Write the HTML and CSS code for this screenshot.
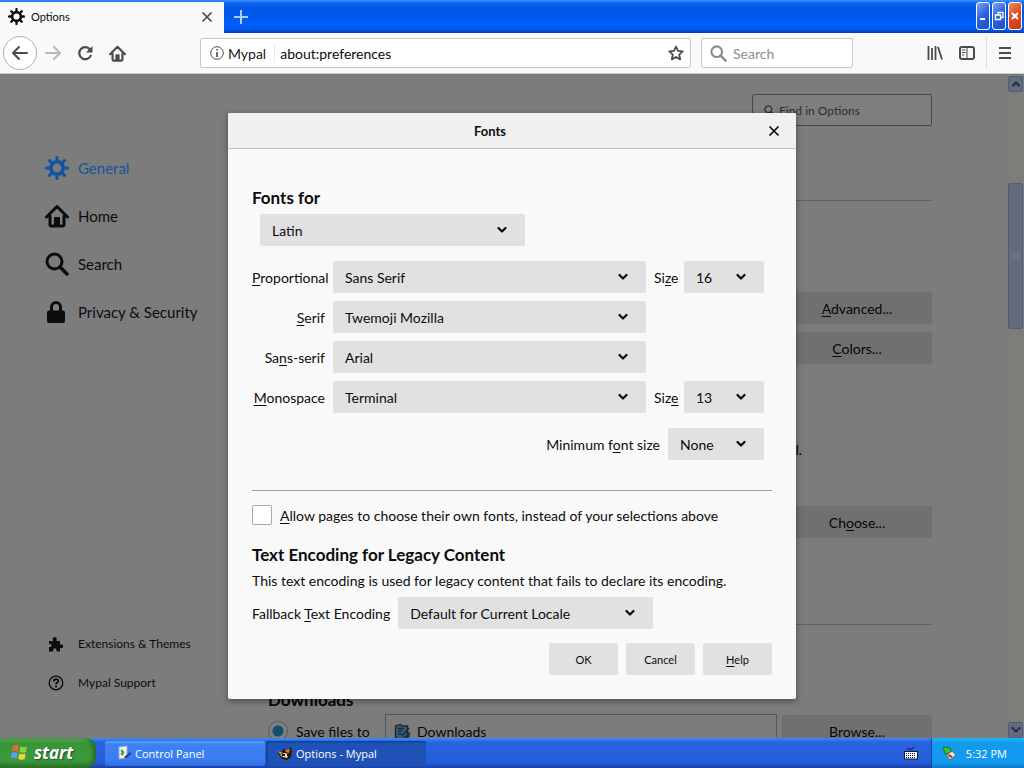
FILE: index.html
```html
<!DOCTYPE html>
<html lang="en">
<head>
    <meta charset="UTF-8">
    <meta name="viewport" content="width=device-width, initial-scale=1.0">
    <title>Options</title>
    <link rel="stylesheet" href="styles.css">
</head>
<body>

    <!-- shared icons -->
    <svg class="defs" width="0" height="0">
        <symbol id="gear" viewBox="0 0 24 24">
            <circle cx="12" cy="12" r="6.200" fill="none" stroke="currentColor" stroke-width="3.600"/>
            <g stroke="currentColor" stroke-width="3.200" stroke-linecap="round">
                <path d="M12 1.500v4M12 18.500v4M1.500 12h4M18.500 12h4M4.600 4.600l2.800 2.800M16.600 16.600l2.800 2.800M4.600 19.400l2.800-2.800M16.600 7.400l2.800-2.800"/>
            </g>
        </symbol>
        <symbol id="house" viewBox="0 0 24 24">
            <path d="M1.500 13L12 2.500 22.500 13M5 12v8.500q0 1.500 1.500 1.500h11q1.500 0 1.500-1.500V12" fill="none" stroke="currentColor" stroke-width="3" stroke-linecap="round" stroke-linejoin="round"/>
            <path d="M9 22v-8q0-1 1-1h4q1 0 1 1v8z" fill="currentColor"/>
        </symbol>
        <symbol id="glass" viewBox="0 0 24 24">
            <circle cx="9.500" cy="9.500" r="7.500" fill="none" stroke="currentColor" stroke-width="3"/>
            <path d="M15 15l7 7" stroke="currentColor" stroke-width="3.500" stroke-linecap="round"/>
        </symbol>
        <symbol id="chevron" viewBox="0 0 10 8">
            <path d="M1.500 2L5 5.500 8.500 2" fill="none" stroke="currentColor" stroke-width="2.200" stroke-linecap="round" stroke-linejoin="round"/>
        </symbol>
        <symbol id="cross" viewBox="0 0 12 12">
            <path d="M1.500 1.500l9 9M10.500 1.500l-9 9" stroke="currentColor" stroke-width="1.700"/>
        </symbol>
    </svg>

    <header class="titlebar">
        <div class="tab">
            <svg class="tab-icon"><use href="#gear"/></svg>
            <span class="tab-title">Options</span>
            <button class="tab-close" aria-label="Close tab"><svg width="12" height="12"><use href="#cross"/></svg></button>
        </div>
        <button class="new-tab" aria-label="New tab"><svg width="16" height="16" viewBox="0 0 16 16"><path d="M8 1v14M1 8h14" stroke="#a8d0ff" stroke-width="2"/></svg></button>
        <div class="window-buttons">
            <button class="win" aria-label="Minimize"><svg viewBox="0 0 12 26"><path d="M3 16h5" stroke="#fff" stroke-width="2"/></svg></button>
            <button class="win" aria-label="Restore"><svg viewBox="0 0 12 26"><path d="M5 12V9.500h5v5H8M2.500 12h5v4.500h-5z" fill="none" stroke="#fff" stroke-width="1.300"/></svg></button>
            <button class="win win-close" aria-label="Close"><svg viewBox="0 0 12 26"><path d="M3 10l6 6M9 10l-6 6" stroke="#fff" stroke-width="2"/></svg></button>
        </div>
    </header>

    <nav class="toolbar">
        <button class="back" aria-label="Back"><svg width="18" height="18" viewBox="0 0 18 18"><path d="M16 9H2M8 3L2 9l6 6" fill="none" stroke="currentColor" stroke-width="2" stroke-linecap="round" stroke-linejoin="round"/></svg></button>
        <button class="tool forward" aria-label="Forward"><svg width="16" height="16" viewBox="0 0 16 16"><path d="M1 8h14M9 2l6 6-6 6" fill="none" stroke="currentColor" stroke-width="2" stroke-linecap="round" stroke-linejoin="round"/></svg></button>
        <button class="tool" aria-label="Reload"><svg width="16" height="16" viewBox="0 0 16 16"><path d="M13 4.500A6 6 0 1 0 14 10" fill="none" stroke="currentColor" stroke-width="2.200"/><path d="M15.500 1v6.500H9z" fill="currentColor"/></svg></button>
        <button class="tool" aria-label="Home"><svg width="17" height="17"><use href="#house"/></svg></button>
        <div class="urlbar">
            <svg width="14" height="14" viewBox="0 0 14 14"><circle cx="7" cy="7" r="6.300" fill="none" stroke="currentColor"/><path d="M7 6v5M7 3v1.600" stroke="currentColor" stroke-width="1.600"/></svg>
            <span class="identity">Mypal</span>
            <input class="url" type="text" value="about:preferences" aria-label="Address">
            <button class="star" aria-label="Bookmark"><svg width="16" height="16" viewBox="0 0 16 16"><path d="M8 1.500l2 4.400 4.700.5-3.500 3.200 1 4.800L8 12l-4.200 2.400 1-4.800L1.300 6.400 6 5.900z" fill="none" stroke="currentColor" stroke-width="1.800" stroke-linejoin="round"/></svg></button>
        </div>
        <div class="searchbar">
            <svg width="17" height="17"><use href="#glass"/></svg>
            <input type="text" placeholder="Search" aria-label="Search">
        </div>
        <button class="tool" aria-label="Library"><svg width="16" height="16" viewBox="0 0 16 16"><path d="M1.500 1v14M5 3v12M8.500 1v14M11 2l4 12.500" stroke="currentColor" stroke-width="1.800"/></svg></button>
        <button class="tool" aria-label="Sidebars"><svg width="16" height="16" viewBox="0 0 16 16"><rect x="1" y="2" width="14" height="12" rx="2" fill="none" stroke="currentColor" stroke-width="2"/><path d="M8 2v12M3 5h3.500M3 7.500h3.500M3 10h2" stroke="currentColor"/></svg></button>
        <button class="tool menu" aria-label="Menu"><svg width="14" height="14" viewBox="0 0 14 14"><path d="M1 2h12M1 7h12M1 12h12" stroke="currentColor" stroke-width="2"/></svg></button>
    </nav>

    <main class="page">
        <aside class="sidebar">
            <a class="category selected" href="#general"><svg><use href="#gear"/></svg>General</a>
            <a class="category" href="#home"><svg><use href="#house"/></svg>Home</a>
            <a class="category" href="#search"><svg><use href="#glass"/></svg>Search</a>
            <a class="category" href="#privacy"><svg viewBox="0 0 24 24"><rect x="2" y="10.500" width="18" height="12.500" rx="2" fill="currentColor"/><path d="M6.500 11V7a4.500 4.500 0 0 1 9 0v4" fill="none" stroke="currentColor" stroke-width="3"/></svg>Privacy &amp; Security</a>
            <div class="sidebar-footer">
                <a class="category small" href="#addons"><svg viewBox="0 0 16 16"><path d="M1 5h4V4a2 2 0 1 1 3.500 0v1H12v3.500h1a1.800 1.800 0 1 1 0 3.500h-1v3.500H8.500V14a1.700 1.700 0 0 0-3.400 0v1.500H1V11h1a1.500 1.500 0 0 0 0-3H1z" fill="currentColor"/></svg>Extensions &amp; Themes</a>
                <a class="category small" href="#support"><svg viewBox="0 0 16 16"><circle cx="8" cy="8" r="6.800" fill="none" stroke="currentColor" stroke-width="1.300"/><path d="M5.800 6.500c0-3 4.500-3 4.500-.4C10.300 7.500 8 7.700 8 9.500M8 10.800v1.800" fill="none" stroke="currentColor" stroke-width="1.800"/></svg>Mypal Support</a>
            </div>
        </aside>

        <section class="content">
            <div class="find">
                <svg width="11" height="11"><use href="#glass"/></svg>
                <input type="text" placeholder="Find in Options" aria-label="Find in Options">
            </div>
            <div class="group group-fonts">
                <button class="btn"><u>A</u>dvanced...</button>
                <button class="btn"><u>C</u>olors...</button>
            </div>
            <p class="note">al.</p>
            <button class="btn choose">Ch<u>o</u>ose...</button>
            <div class="group group-files">
                <h2>Downloads</h2>
                <div class="save-row">
                    <label class="save"><input type="radio" name="save" checked>Save files to</label>
                    <div class="folder">
                        <svg width="17" height="17" viewBox="0 0 17 17"><path d="M1.500 3l5-1.500L8 3h5.500v12.500h-12z" fill="#87b5dc" stroke="#23567f" stroke-width="1.500"/><path d="M4 5.500h6M4 8h4M4 11h4M8 13l7-8M10 13.500h5V9" fill="none" stroke="#23567f" stroke-width="1.500"/></svg>
                        <input type="text" value="Downloads" aria-label="Download folder">
                    </div>
                    <button class="btn">Browse...</button>
                </div>
            </div>
        </section>

        <div class="scrollbar">
            <button class="arrow" aria-label="Scroll up"><svg width="10" height="8" viewBox="0 0 10 8"><path d="M1.500 6L5 2.500 8.500 6" fill="none" stroke="#4d6185" stroke-width="2.200"/></svg></button>
            <div class="thumb"><svg width="8" height="9" viewBox="0 0 8 9"><path d="M0 1h8M0 4h8M0 7h8" stroke="#eef4fe"/></svg></div>
            <button class="arrow" aria-label="Scroll down"><svg width="10" height="8"><use href="#chevron"/></svg></button>
        </div>

        <div class="overlay">
            <form class="dialog" role="dialog" aria-labelledby="dialog-title">
                <div class="dialog-header">
                    <span id="dialog-title">Fonts</span>
                    <button type="button" class="dialog-close" aria-label="Close"><svg width="12" height="12"><use href="#cross"/></svg></button>
                </div>
                <div class="dialog-body">
                    <h2><label for="language">Fonts for</label></h2>
                    <div class="select language">
                        <select id="language"><option>Latin</option></select>
                        <svg><use href="#chevron"/></svg>
                    </div>

                    <div class="font-grid">
                        <label class="name" for="proportional"><u>P</u>roportional</label>
                        <div class="select"><select id="proportional"><option>Sans Serif</option></select><svg><use href="#chevron"/></svg></div>
                        <label for="size-var">Si<u>z</u>e</label>
                        <div class="select"><select id="size-var"><option>16</option></select><svg><use href="#chevron"/></svg></div>

                        <label class="name" for="serif"><u>S</u>erif</label>
                        <div class="select"><select id="serif"><option>Twemoji Mozilla</option></select><svg><use href="#chevron"/></svg></div>

                        <label class="name" for="sans">Sa<u>n</u>s-serif</label>
                        <div class="select"><select id="sans"><option>Arial</option></select><svg><use href="#chevron"/></svg></div>

                        <label class="name" for="mono"><u>M</u>onospace</label>
                        <div class="select"><select id="mono"><option>Terminal</option></select><svg><use href="#chevron"/></svg></div>
                        <label for="size-mono">Siz<u>e</u></label>
                        <div class="select"><select id="size-mono"><option>13</option></select><svg><use href="#chevron"/></svg></div>
                    </div>

                    <div class="minimum">
                        <label for="min-size">Minimum f<u>o</u>nt size</label>
                        <div class="select"><select id="min-size"><option>None</option></select><svg><use href="#chevron"/></svg></div>
                    </div>

                    <hr>

                    <label class="allow"><input type="checkbox"><span><u>A</u>llow pages to choose their own fonts, instead of your selections above</span></label>

                    <h2>Text Encoding for Legacy Content</h2>
                    <p>This text encoding is used for legacy content that fails to declare its encoding.</p>
                    <div class="fallback">
                        <label for="encoding">Fallback <u>T</u>ext Encoding</label>
                        <div class="select"><select id="encoding"><option>Default for Current Locale</option></select><svg><use href="#chevron"/></svg></div>
                    </div>

                    <div class="dialog-buttons">
                        <button type="button">OK</button>
                        <button type="button">Cancel</button>
                        <button type="button"><u>H</u>elp</button>
                    </div>
                </div>
            </form>
        </div>
    </main>

    <footer class="taskbar">
        <button class="start">
            <svg width="20" height="20" viewBox="0 0 20 20"><path d="M3 4q3-2 6 0L8 9.500q-3-1.500-6 0z" fill="#f0623a"/><path d="M10.500 4.500q3 1.500 6.500 0l-1 5.500q-3 1.500-6.500 0z" fill="#8bd23c"/><path d="M1.700 11q3-1.500 6 0l-1 5.500q-3-1.500-6 0z" fill="#5b9cf5"/><path d="M9.200 11.500q3 1.500 6.500 0l-1 5.500q-3 1.500-6.500 0z" fill="#fbce3b"/></svg>
            start
        </button>
        <button class="task">
            <svg width="16" height="16" viewBox="0 0 16 16"><path d="M3 2l8-1v12l-8 1z" fill="#eef6e8" stroke="#8bb0d8"/><path d="M5 5l3 3M5 8l2 2" stroke="#469455" stroke-width="2"/><path d="M8 12l6-5 1 2-5 5z" fill="#24488e"/></svg>
            Control Panel
        </button>
        <button class="task active">
            <svg width="16" height="16" viewBox="0 0 16 16"><path d="M1 6l3 1 3-3 3 1 4-3 1 4-1 6-4 3-5-1-3-4z" fill="#2b1a12"/><path d="M3 10l4-2 5 1-2 4-4-1z" fill="#f0dba9"/><path d="M8 5l5-1-1 4-3-1z" fill="#dc7b27"/><path d="M1 6l2 3 3-1z" fill="#e8a74c"/><path d="M5 10h3M10 10h2" stroke="#17120f" stroke-width="2"/></svg>
            Options - Mypal
        </button>
        <svg class="keyboard" width="14" height="14" viewBox="0 0 14 14"><path d="M3 4q1-3 3-1t4-2" fill="none" stroke="#101840"/><rect x=".5" y="5.500" width="13" height="7.500" fill="#fff" stroke="#101840"/><path d="M2 7.500h10M2 9.500h10M2 11.500h10" stroke="#101840" stroke-dasharray="1 1"/></svg>
        <div class="tray">
            <svg width="16" height="16" viewBox="0 0 16 16"><path d="M2 2l7 1 1 4-6 2z" fill="#35c738" stroke="#167a28"/><path d="M5 10l6-4 4 4-6 5z" fill="#e4e4d4" stroke="#59645f"/><path d="M7 10l4 2" stroke="#b33c30" stroke-width="2"/></svg>
            <span>5:32 PM</span>
        </div>
    </footer>

</body>
</html>
```

FILE: styles.css
```css
* {
    box-sizing: border-box;
}

body {
    margin: 0;
    height: 100vh;
    display: flex;
    flex-direction: column;
    overflow: hidden;
    font-family: Lato, sans-serif;
    font-size: 14px;
    color: #0c0c0d;
}

button, input, select {
    font: inherit;
    color: inherit;
    margin: 0;
    padding: 0;
    border: none;
    background: none;
}

svg {
    flex: none;
}

.defs {
    position: absolute;
}

h2 {
    margin: 0;
    font-size: 17px;
    line-height: 24px;
    font-weight: 700;
}

u {
    text-underline-offset: 2px;
}

/* Title bar */

.titlebar {
    display: flex;
    height: 33px;
    background: linear-gradient(#3c93ff, #0f66ee 3px, #0055e5 10px, #0060fa 26px, #0058e6 30px, #003bb0);
}

.tab {
    display: flex;
    align-items: center;
    width: 224px;
    margin-top: 2px;
    padding: 0 11px 2px 8px;
    background: #f9f9fa;
    font-size: 11px;
}

.tab-icon {
    width: 17px;
    height: 17px;
    margin-right: 6px;
}

.tab-title {
    flex: 1;
}

.tab-close, .new-tab, .back, .tool, .star, .win, .dialog-close, .arrow {
    display: flex;
    align-items: center;
    justify-content: center;
}

.tab-close {
    color: #4a4a4f;
}

.new-tab {
    width: 34px;
}

.window-buttons {
    display: flex;
    gap: 2px;
    margin-left: auto;
    padding: 2px 2px 3px 0;
}

.win {
    width: 14px;
    border: 1px solid #fff;
    border-radius: 3px;
    background: linear-gradient(135deg, #7ca5f4, #2c5fdc 50%, #1c4fc8);
}

.win-close {
    background: linear-gradient(135deg, #f08c6c, #dc4a20 50%, #c43c10);
}

.win svg {
    width: 12px;
    height: 26px;
}

/* Toolbar */

.toolbar {
    display: flex;
    align-items: center;
    height: 41px;
    padding: 0 2px 0 3px;
    background: #f9f9fa;
    border-bottom: 1px solid #ccc;
    color: #4a4a4f;
}

.back {
    width: 34px;
    height: 34px;
    border: 1px solid #b1b1b1;
    border-radius: 50%;
    background: #fff;
}

.tool {
    width: 32px;
    height: 32px;
}

.forward {
    color: #b8b8b9;
}

.menu {
    width: 36px;
    margin-left: 3px;
    border-left: 1px solid #ddd;
}

.urlbar, .searchbar {
    display: flex;
    align-items: center;
    height: 30px;
    border: 1px solid #c8c8c0;
    border-radius: 2px;
    background: #fff;
}

.urlbar {
    flex: 1;
    min-width: 0;
    margin-left: 67px;
    padding: 0 6px 0 9px;
}

.identity {
    margin-left: 4px;
    padding-right: 8px;
    color: #202020;
    border-right: 1px solid #e8e8e8;
}

.url {
    flex: 1;
    min-width: 0;
    margin-left: 5px;
    color: #0c0c0d;
}

.searchbar {
    width: 152px;
    margin: 0 66px 0 10px;
    padding-left: 8px;
    color: #8c8c8c;
}

.searchbar input {
    width: 110px;
    margin-left: 6px;
}

input::placeholder {
    color: inherit;
    opacity: 1;
}

/* Options page */

.page {
    position: relative;
    flex: 1;
    min-height: 0;
    display: flex;
    overflow: hidden;
    background: #f9f9fa;
}

/* The category list keeps its own colours over the dimmed page */
.sidebar {
    position: relative;
    z-index: 2;
    display: flex;
    flex-direction: column;
    width: 228px;
    padding: 70px 0 36px 45px;
}

.category {
    display: flex;
    align-items: center;
    gap: 9px;
    height: 48px;
    font-size: 15px;
    color: #0c0c0d;
    text-decoration: none;
}

.category svg {
    width: 24px;
    height: 24px;
}

.selected {
    color: #14549e;
}

.sidebar-footer {
    margin-top: auto;
}

.small {
    height: 39px;
    gap: 14px;
    padding-left: 3px;
    font-size: 12px;
}

.small svg {
    width: 16px;
    height: 16px;
}

.content {
    flex: 0 1 664px;
    margin-left: 40px;
    padding-top: 20px;
}

.find {
    display: flex;
    align-items: center;
    width: 180px;
    height: 32px;
    margin-left: auto;
    padding-left: 11px;
    border: 1px solid #909090;
    border-radius: 2px;
    background: #fdfdfd;
    font-size: 12px;
    color: #606060;
}

.find input {
    width: 140px;
    margin-left: 4px;
}

.group {
    border-top: 1px solid #c4c4c4;
}

.group-fonts {
    display: flex;
    flex-direction: column;
    align-items: flex-end;
    gap: 8px;
    margin-top: 74px;
    padding-top: 91px;
}

.btn {
    width: 150px;
    height: 32px;
    border-radius: 2px;
    background: #e1e1e2;
}

.note {
    margin: 76px 130px 46px 0;
    line-height: 20px;
    text-align: right;
}

.choose {
    display: block;
    margin-left: auto;
}

.group-files {
    margin-top: 86px;
    padding-top: 63px;
}

.save-row {
    display: flex;
    align-items: center;
    margin-top: 2px;
}

.save {
    display: flex;
    align-items: center;
    gap: 8px;
    width: 117px;
    white-space: nowrap;
}

.save input {
    appearance: none;
    width: 20px;
    height: 20px;
    border: 1px solid #b0b0b0;
    border-radius: 50%;
    background: radial-gradient(circle, #2a9ad8 5px, #fff 6px);
}

.folder {
    flex: 1;
    min-width: 0;
    display: flex;
    align-items: center;
    gap: 6px;
    height: 34px;
    margin-right: 5px;
    padding-left: 8px;
    border: 1px solid #b0b0b0;
}

.scrollbar {
    display: flex;
    flex-direction: column;
    width: 16px;
    margin-left: auto;
    padding-top: 2px;
    background: #fbfbf4;
    color: #4d6185;
}

.arrow, .thumb {
    width: 15px;
    height: 16px;
    border: 1px solid #a4b8f4;
    border-radius: 2px;
    background: #c8d6fb;
}

.thumb {
    display: flex;
    align-items: center;
    justify-content: center;
    height: 146px;
    margin: 91px 0 auto;
}

/* Dialog */

.overlay {
    position: absolute;
    inset: 0;
    z-index: 1;
    display: flex;
    align-items: center;
    justify-content: center;
    background: rgba(0, 0, 0, 0.5);
}

.dialog {
    width: 568px;
    border-radius: 2px;
    background: #f9f9fa;
    box-shadow: 0 2px 6px rgba(0, 0, 0, 0.4);
}

.dialog-header {
    display: flex;
    align-items: center;
    height: 36px;
    border-bottom: 1px solid #c1c1c1;
    border-radius: 2px 2px 0 0;
    background: #f0f0f1;
    font-size: 13px;
    font-weight: 700;
}

#dialog-title {
    flex: 1;
    text-align: center;
}

.dialog-close {
    width: 44px;
    height: 32px;
}

.dialog-body {
    padding: 37px 24px 24px;
}

.select {
    display: grid;
    align-items: center;
}

.select select {
    grid-area: 1 / 1;
    appearance: none;
    width: 100%;
    height: 32px;
    padding: 0 12px;
    border-radius: 2px;
    background: #e1e1e2;
}

.select svg {
    grid-area: 1 / 1;
    justify-self: end;
    width: 10px;
    height: 8px;
    margin-right: 18px;
    pointer-events: none;
}

.language {
    width: 265px;
    margin: 4px 0 15px 8px;
}

.font-grid {
    display: grid;
    grid-template-columns: 73px 1fr 22px 80px;
    gap: 8px;
    align-items: center;
    padding-right: 8px;
}

.font-grid .name {
    grid-column: 1;
    text-align: right;
}

.minimum {
    display: flex;
    align-items: center;
    justify-content: flex-end;
    gap: 8px;
    margin-top: 15px;
    padding-right: 8px;
}

.minimum .select {
    width: 96px;
}

hr {
    margin: 30px 0 14px;
    border: none;
    border-top: 1px solid #a0a0a0;
}

.allow {
    display: flex;
    align-items: center;
    gap: 8px;
    height: 20px;
    margin-bottom: 18px;
}

.allow input {
    appearance: none;
    width: 20px;
    height: 20px;
    border: 1px solid #a8a8a8;
    border-radius: 2px;
    background: #fff;
}

.dialog-body p {
    margin: 4px 0 6px;
    line-height: 20px;
}

.fallback {
    display: flex;
    align-items: center;
    gap: 8px;
}

.fallback .select {
    width: 255px;
}

.dialog-buttons {
    display: flex;
    justify-content: flex-end;
    gap: 8px;
    margin-top: 14px;
}

.dialog-buttons button {
    width: 69px;
    height: 32px;
    border-radius: 2px;
    background: #e1e1e2;
    font-size: 11px;
}

/* Taskbar */

.taskbar {
    display: flex;
    align-items: center;
    height: 30px;
    background: linear-gradient(#3f8cf3, #2a63e0 4px, #245edb 24px, #1941a5);
    font-family: "Open Sans", sans-serif;
    font-size: 11px;
    color: #fff;
}

.start {
    display: flex;
    align-items: center;
    gap: 4px;
    width: 96px;
    height: 30px;
    margin-right: 9px;
    padding: 0 0 2px 10px;
    border-radius: 0 10px 10px 0;
    background: linear-gradient(#5fb95c, #3a953a 5px, #3c9a3c 22px, #2a7429);
    box-shadow: inset -3px 0 4px #246b24;
    font-size: 17px;
    font-weight: 700;
    font-style: italic;
    text-shadow: 1px 1px 2px #1c4c1c;
}

.task {
    display: flex;
    align-items: center;
    gap: 3px;
    width: 160px;
    height: 25px;
    margin-right: 1px;
    padding-left: 11px;
    border-radius: 2px;
    background: linear-gradient(#5c9cfc, #3c81f3 4px, #3a7cf0 20px, #2f6ae0);
}

.active {
    background: #1e52b7;
    box-shadow: inset 1px 1px 2px #123a80;
}

.keyboard {
    margin-left: auto;
}

.tray {
    display: flex;
    align-items: center;
    gap: 9px;
    height: 30px;
    margin-left: 13px;
    padding: 0 17px 0 9px;
    border-left: 1px solid #0c4a9c;
    background: linear-gradient(#1fb6f4, #149aec 5px, #129af0 24px, #0d7bc8);
}
```
